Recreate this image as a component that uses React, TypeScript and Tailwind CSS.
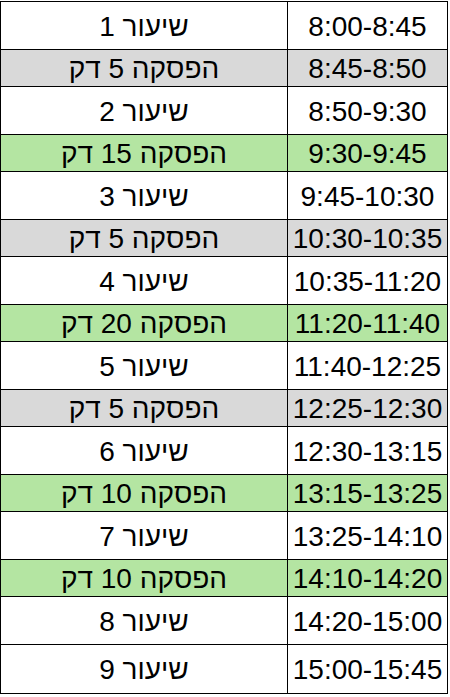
import React from "react";

type Row = { label: string; time: string; kind: "lesson" | "gray" | "green" };

const rows: Row[] = [
  { label: "שיעור 1", time: "8:00-8:45", kind: "lesson" },
  { label: "הפסקה 5 דק", time: "8:45-8:50", kind: "gray" },
  { label: "שיעור 2", time: "8:50-9:30", kind: "lesson" },
  { label: "הפסקה 15 דק", time: "9:30-9:45", kind: "green" },
  { label: "שיעור 3", time: "9:45-10:30", kind: "lesson" },
  { label: "הפסקה 5 דק", time: "10:30-10:35", kind: "gray" },
  { label: "שיעור 4", time: "10:35-11:20", kind: "lesson" },
  { label: "הפסקה 20 דק", time: "11:20-11:40", kind: "green" },
  { label: "שיעור 5", time: "11:40-12:25", kind: "lesson" },
  { label: "הפסקה 5 דק", time: "12:25-12:30", kind: "gray" },
  { label: "שיעור 6", time: "12:30-13:15", kind: "lesson" },
  { label: "הפסקה 10 דק", time: "13:15-13:25", kind: "green" },
  { label: "שיעור 7", time: "13:25-14:10", kind: "lesson" },
  { label: "הפסקה 10 דק", time: "14:10-14:20", kind: "green" },
  { label: "שיעור 8", time: "14:20-15:00", kind: "lesson" },
  { label: "שיעור 9", time: "15:00-15:45", kind: "lesson" },
];

export default function App() {
  return (
    <div className="w-[450px] h-[697px] bg-white overflow-hidden">
      <div
        className="mt-px w-[448px] border border-black text-black text-[28px] leading-none"
        style={{ fontFamily: '"Liberation Sans", Arial, sans-serif' }}
      >
        {rows.map((r, i) => {
          const bg =
            r.kind === "gray" ? "bg-[#d9d9d9]" : r.kind === "green" ? "bg-[#b4e5a2]" : "bg-white";
          const h = r.kind === "lesson" ? "h-[48px]" : "h-[37px]";
          const last = i === rows.length - 1;
          return (
            <div
              key={i}
              className={`flex ${h} ${bg} ${last ? "" : "border-b border-black"}`}
            >
              <div
                dir="rtl"
                className="w-[287px] shrink-0 border-r border-black flex items-center justify-center pt-[2px]"
              >
                {r.label}
              </div>
              <div className="flex-1 flex items-center justify-center whitespace-nowrap pt-[2px]">
                {r.time}
              </div>
            </div>
          );
        })}
      </div>
    </div>
  );
}
